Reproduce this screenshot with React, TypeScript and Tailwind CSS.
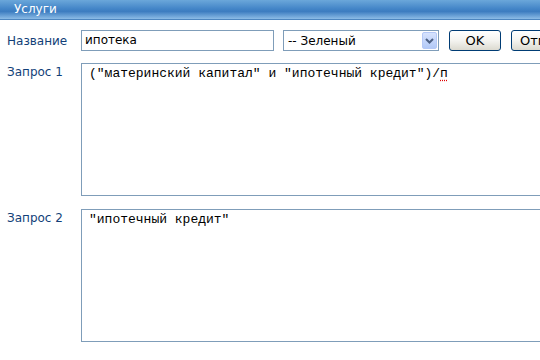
import React from 'react'

const labelCls = 'w-[81px] shrink-0 pl-[7px] text-[12px] text-[#123f78]'

const ChevronDown = () => (
  <svg width="9" height="6" viewBox="0 0 9 6">
    <path d="M1 1 L4.5 4.5 L8 1" fill="none" stroke="#4d6185" strokeWidth="2" />
  </svg>
)

const XpButton: React.FC<{ label: string; width: string }> = ({ label, width }) => (
  <button
    type="button"
    className={`${width} h-[21px] shrink-0 rounded-[3px] border border-[#003c74] bg-gradient-to-b from-white via-[#f4f4f0] to-[#dcdad0] text-[13px] text-black leading-none`}
  >
    {label}
  </button>
)

const monoFont = { fontFamily: '"Liberation Mono", "Courier New", monospace' }

const App: React.FC = () => {
  return (
    <div
      className="w-[540px] h-[360px] overflow-hidden bg-white"
      style={{ fontFamily: '"DejaVu Sans", Verdana, sans-serif' }}
    >
      <div className="h-[20px] border-b border-[#4d86c0] bg-[linear-gradient(to_bottom,#6ba7da_0%,#4486c8_45%,#3c7cc0_60%,#8cbce6_100%)] pl-[14px] text-[12px] leading-[18px] text-white">
        Услуги
      </div>

      <div className="flex flex-col pt-[10px]">
        <div className="flex items-center h-[21px]">
          <div className={labelCls}>Название</div>
          <div className="w-[193px] h-[21px] shrink-0 border border-[#7f9db9] pl-[3px] text-[12px] leading-[19px] text-black">
            ипотека
          </div>
          <div className="ml-[9px] flex w-[156px] h-[21px] shrink-0 items-center border border-[#7f9db9] pl-[4px] pr-[1px] text-[12px] text-black">
            <span className="flex-1">-- Зеленый</span>
            <span className="flex w-[15px] h-[17px] items-center justify-center rounded-[2px] border border-[#b4c8f6] bg-gradient-to-b from-[#d7e3fd] to-[#b2c9f7]">
              <ChevronDown />
            </span>
          </div>
          <div className="ml-[10px] flex gap-[10px]">
            <XpButton label="OK" width="w-[52px]" />
            <XpButton label="Отмена" width="w-[70px]" />
          </div>
        </div>

        <div className="mt-[12px] flex">
          <div className={labelCls}>Запрос 1</div>
          <div
            className="w-[480px] h-[133px] shrink-0 border border-[#7f9db9] px-[7px] pt-[2px] text-[13px] leading-[15px] text-black whitespace-pre"
            style={monoFont}
          >
            ("материнский капитал" и "ипотечный кредит")/
            <span className="underline decoration-dotted decoration-[#e00000] underline-offset-[3px]">п</span>
          </div>
        </div>

        <div className="mt-[13px] flex">
          <div className={labelCls}>Запрос 2</div>
          <div
            className="w-[480px] h-[133px] shrink-0 border border-[#7f9db9] px-[7px] pt-[2px] text-[13px] leading-[15px] text-black whitespace-pre"
            style={monoFont}
          >
            "ипотечный кредит"
          </div>
        </div>
      </div>
    </div>
  )
}

export default App
